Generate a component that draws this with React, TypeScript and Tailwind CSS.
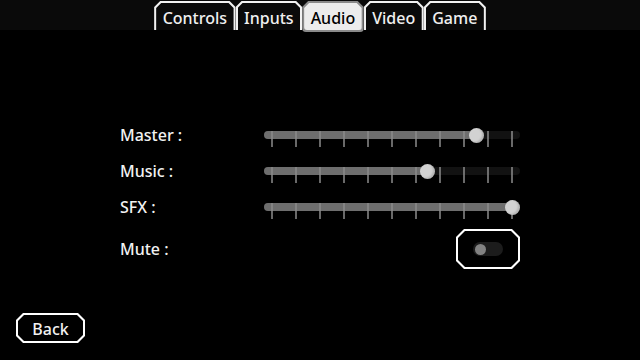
import React from "react";

const tabs = ["Controls", "Inputs", "Audio", "Video", "Game"];

function Tab({ label, active }: { label: string; active: boolean }) {
  if (active) {
    return (
      <div className="mt-[1px] h-[31px] bg-[#8a8a8a] p-[2px] rounded-b-[4px] [clip-path:polygon(6px_0,calc(100%_-_6px)_0,100%_6px,100%_100%,0_100%,0_6px)]">
        <div className="h-full bg-[#ececec] rounded-b-[3px] px-[6.5px] pt-[3px] flex items-center justify-center text-black [clip-path:polygon(5px_0,calc(100%_-_5px)_0,100%_5px,100%_100%,0_100%,0_5px)]">
          {label}
        </div>
      </div>
    );
  }
  return (
    <div className="mt-[1px] h-[29px] bg-[#f2f2f2] pt-[2px] px-[2px] [clip-path:polygon(6px_0,calc(100%_-_6px)_0,100%_6px,100%_100%,0_100%,0_6px)]">
      <div className="h-full bg-[#0a0a0a] px-[6.5px] pt-[3px] flex items-center justify-center text-[#f0f0f0] [clip-path:polygon(5px_0,calc(100%_-_5px)_0,100%_5px,100%_100%,0_100%,0_5px)]">
        {label}
      </div>
    </div>
  );
}

function Slider({ value }: { value: number }) {
  const ticks = Array.from({ length: 11 }, (_, i) => i);
  const pos = 8 + value * 240;
  return (
    <div className="relative w-[256px] h-[20px]">
      <div className="absolute left-0 right-0 top-[2px] h-[8px] rounded-full bg-[#121212]" />
      <div
        className="absolute left-0 top-[2px] h-[8px] rounded-full bg-[#6e6e6e]"
        style={{ width: pos }}
      />
      {ticks.map((i) => (
        <div
          key={i}
          className="absolute top-[2px] h-[16px] w-[2px] bg-[rgba(140,140,140,0.75)]"
          style={{ left: 7 + i * 24 }}
        />
      ))}
      <div
        className="absolute top-[-1px] w-[15px] h-[15px] rounded-full bg-[#d2d2d2] shadow-[inset_-2px_-1px_2px_rgba(0,0,0,0.15)]"
        style={{ left: pos - 7.5 }}
      />
    </div>
  );
}

export default function App() {
  const rows: [string, number][] = [
    ["Master :", 0.85],
    ["Music :", 0.646],
    ["SFX :", 1],
  ];
  return (
    <div
      className="w-[640px] h-[360px] bg-black text-white flex flex-col text-[16px] font-medium overflow-hidden"
      style={{ fontFamily: '"Noto Sans", "Open Sans", sans-serif' }}
    >
      <div className="h-[30px] bg-[#0a0a0a] flex justify-center shrink-0">
        {tabs.map((t) => (
          <Tab key={t} label={t} active={t === "Audio"} />
        ))}
      </div>
      <div className="pl-[120px] mt-[87px] flex flex-col">
        {rows.map(([label, v]) => (
          <div key={label} className="h-[36px] flex items-center">
            <div className="w-[144px] text-[#f2f2f2]">{label}</div>
            <div className="pt-[8px]">
              <Slider value={v} />
            </div>
          </div>
        ))}
        <div className="mt-[4px] h-[40px] flex items-center">
          <div className="w-[144px] text-[#f2f2f2]">Mute :</div>
          <div className="w-[256px] flex justify-end">
            <div className="w-[64px] h-[40px] bg-white p-[2px] [clip-path:polygon(8px_0,calc(100%_-_8px)_0,100%_8px,100%_calc(100%_-_8px),calc(100%_-_8px)_100%,8px_100%,0_calc(100%_-_8px),0_8px)]">
              <div className="w-full h-full bg-black flex items-center justify-center [clip-path:polygon(7px_0,calc(100%_-_7px)_0,100%_7px,100%_calc(100%_-_7px),calc(100%_-_7px)_100%,7px_100%,0_calc(100%_-_7px),0_7px)]">
                <div className="w-[30px] h-[14px] rounded-full bg-[#1c1c1c] flex items-center pl-[2px]">
                  <div className="w-[11px] h-[11px] rounded-full bg-[#828282]" />
                </div>
              </div>
            </div>
          </div>
        </div>
      </div>
      <div className="pl-[16px] mt-[44px]">
        <div className="w-[69px] h-[30px] bg-white p-[2px] [clip-path:polygon(7px_0,calc(100%_-_7px)_0,100%_7px,100%_calc(100%_-_7px),calc(100%_-_7px)_100%,7px_100%,0_calc(100%_-_7px),0_7px)]">
          <div className="w-full h-full bg-black flex items-center justify-center pt-[1px] text-[#f2f2f2] [clip-path:polygon(6px_0,calc(100%_-_6px)_0,100%_6px,100%_calc(100%_-_6px),calc(100%_-_6px)_100%,6px_100%,0_calc(100%_-_6px),0_6px)]">
            Back
          </div>
        </div>
      </div>
    </div>
  );
}
